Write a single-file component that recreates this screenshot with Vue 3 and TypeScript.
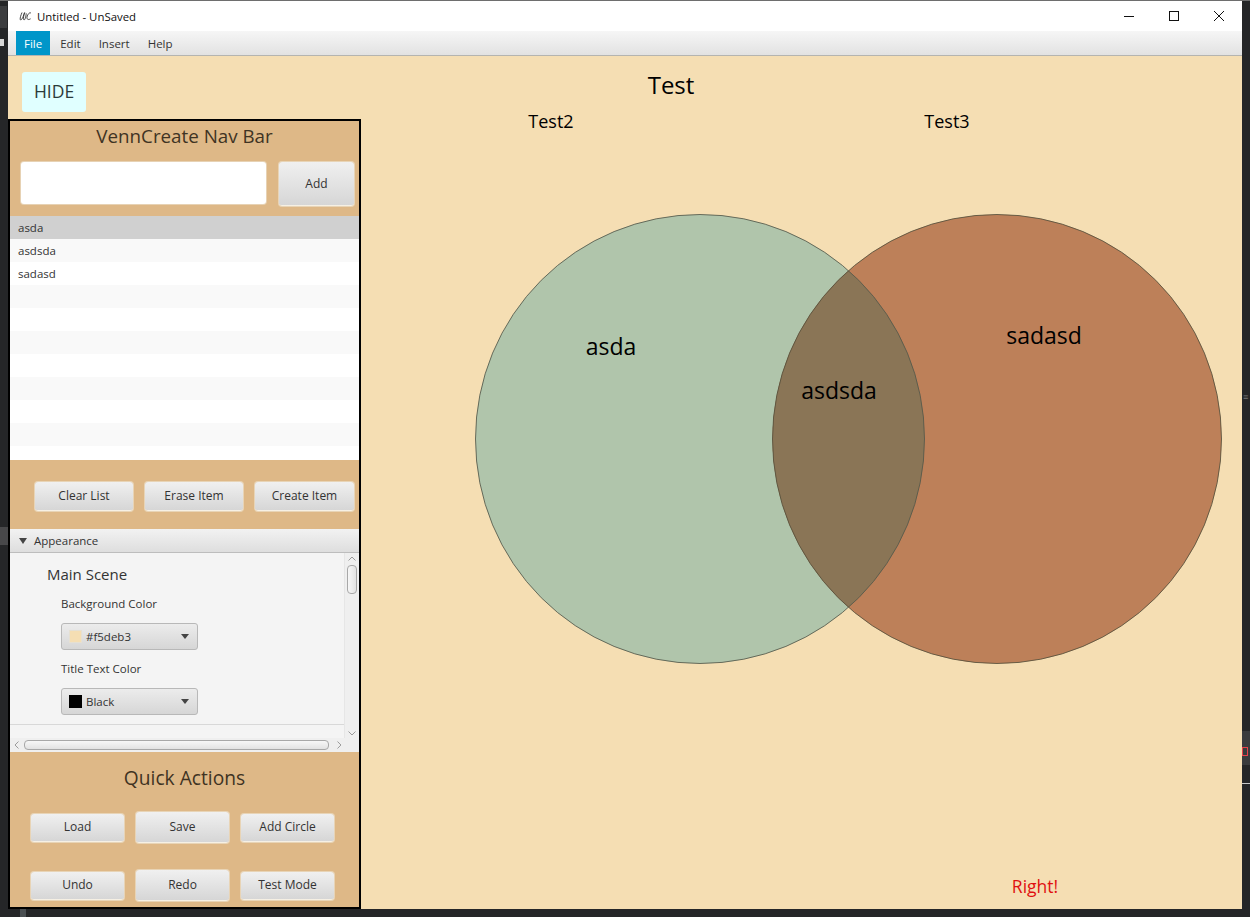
<template>
  <div class="desktop">
    <div class="bg-strip left-top"></div>
    <div class="bg-strip left-icon"></div>
    <div class="bg-strip left-tab"></div>
    <div class="bg-strip right-mark">≡</div>
    <div class="bg-strip right-tab"><span class="red-box"></span></div>
    <div class="bg-strip right-line"></div>
    <div class="bg-strip bottom-bar"></div>

    <div class="window">
      <header class="titlebar">
        <svg class="logo" width="13" height="11" viewBox="0 0 13 11">
          <path d="M3 1.5C2 4 .8 7 1.3 8.6c.5 1.2 2-.8 3-3.400L5.600 1.600C4.800 4 4 7.500 4.800 8.800c.7.800 2.200-2 2.400-6.500" fill="none" stroke="#333" stroke-width=".9" />
          <path d="M12 2.200C10.600.8 8.600 3.400 8 6c-.4 2 1 3.400 3.600 1.800" fill="none" stroke="#333" stroke-width=".9" />
        </svg>
        <span class="title-text">Untitled - UnSaved</span>
        <div class="win-controls">
          <svg width="12" height="12" viewBox="0 0 12 12"><path d="M1 6.500h10" stroke="#111" stroke-width="1" /></svg>
          <svg width="12" height="12" viewBox="0 0 12 12"><rect x="1.500" y="1.500" width="9" height="9" fill="none" stroke="#111" /></svg>
          <svg width="12" height="12" viewBox="0 0 12 12"><path d="M1 1l10 10M11 1L1 11" stroke="#111" stroke-width="1" /></svg>
        </div>
      </header>

      <nav class="menubar">
        <span v-for="(m, i) in menus" :key="m" class="menu-item" :class="{ active: i === 0 }">{{ m }}</span>
      </nav>

      <div class="content">
        <aside class="sidebar">
          <button class="hide-btn">HIDE</button>
          <div class="panel">
            <h2 class="panel-title">VennCreate Nav Bar</h2>
            <div class="add-row">
              <div class="text-input"></div>
              <button class="btn add-btn">Add</button>
            </div>
            <ul class="list">
              <li v-for="(row, i) in rows" :key="i" class="list-row" :class="{ selected: i === 0, odd: i % 2 === 1 }">{{ row }}</li>
            </ul>
            <div class="list-actions">
              <button class="btn">Clear List</button>
              <button class="btn">Erase Item</button>
              <button class="btn">Create Item</button>
            </div>

            <div class="accordion-head">
              <svg width="8" height="6" viewBox="0 0 8 6"><path d="M0 0h8L4 6z" fill="#444" /></svg>
              <span>Appearance</span>
            </div>
            <div class="scroll-pane">
              <div class="scroll-main">
                <div class="scroll-content">
                  <div class="scene-title">Main Scene</div>
                  <div class="field-label">Background Color</div>
                  <div class="combo">
                    <span class="swatch cream"></span>
                    <span class="combo-text">#f5deb3</span>
                    <svg width="8" height="5" viewBox="0 0 8 5"><path d="M0 0h8L4 5z" fill="#444" /></svg>
                  </div>
                  <div class="field-label">Title Text Color</div>
                  <div class="combo">
                    <span class="swatch black"></span>
                    <span class="combo-text">Black</span>
                    <svg width="8" height="5" viewBox="0 0 8 5"><path d="M0 0h8L4 5z" fill="#444" /></svg>
                  </div>
                </div>
                <div class="vbar">
                  <svg width="8" height="5" viewBox="0 0 8 5"><path d="M.5 4.500L4 1l3.500 3.500" fill="none" stroke="#9a9a9a" /></svg>
                  <div class="vthumb"></div>
                  <svg class="down" width="8" height="5" viewBox="0 0 8 5"><path d="M.5 .5L4 4l3.500-3.500" fill="none" stroke="#9a9a9a" /></svg>
                </div>
              </div>
              <div class="hbar">
                <svg width="5" height="8" viewBox="0 0 5 8"><path d="M4.500 .5L1 4l3.500 3.500" fill="none" stroke="#9a9a9a" /></svg>
                <div class="hthumb"></div>
                <svg width="5" height="8" viewBox="0 0 5 8"><path d="M.5 .5L4 4 .5 7.500" fill="none" stroke="#9a9a9a" /></svg>
              </div>
            </div>

            <div class="quick">
              <h2 class="quick-title">Quick Actions</h2>
              <div class="quick-grid">
                <button v-for="q in quickActions" :key="q.label" class="btn" :class="{ tall: q.tall }">{{ q.label }}</button>
              </div>
            </div>
          </div>
        </aside>

        <main class="canvas">
          <svg class="venn" width="881" height="853" viewBox="0 0 881 853">
            <defs>
              <clipPath id="lens"><circle cx="339" cy="383" r="224.500" /></clipPath>
            </defs>
            <circle cx="339" cy="383" r="224.500" fill="#b0c5ab" />
            <circle cx="636" cy="383" r="224.500" fill="#bd8059" />
            <circle cx="636" cy="383" r="224.500" fill="#8a7556" clip-path="url(#lens)" />
            <circle cx="339" cy="383" r="224.500" fill="none" stroke="#55584a" stroke-opacity=".85" stroke-width="1" />
            <circle cx="636" cy="383" r="224.500" fill="none" stroke="#55503c" stroke-opacity=".85" stroke-width="1" />
          </svg>
          <span v-for="t in labels" :key="t.text" class="canvas-label" :class="t.cls" :style="{ left: t.x + 'px', top: t.y + 'px' }">{{ t.text }}</span>
        </main>
      </div>
    </div>
  </div>
</template>

<script setup lang="ts">
const menus: string[] = ["File", "Edit", "Insert", "Help"];

const rows: string[] = ["asda", "asdsda", "sadasd", "", "", "", "", "", "", "", ""];

const quickActions: { label: string; tall?: boolean }[] = [
  { label: "Load" },
  { label: "Save", tall: true },
  { label: "Add Circle" },
  { label: "Undo" },
  { label: "Redo", tall: true },
  { label: "Test Mode" },
];

// centre points, measured from the canvas corner
const labels: { text: string; x: number; y: number; cls: string }[] = [
  { text: "Test", x: 310, y: 28, cls: "big" },
  { text: "Test2", x: 190, y: 65, cls: "mid" },
  { text: "Test3", x: 586, y: 65, cls: "mid" },
  { text: "asda", x: 250, y: 290, cls: "item" },
  { text: "asdsda", x: 478, y: 334, cls: "item" },
  { text: "sadasd", x: 683, y: 279, cls: "item" },
  { text: "Right!", x: 674, y: 830, cls: "right" },
];
</script>

<style>
html,
body {
  margin: 0;
  background: #252526;
}
</style>

<style scoped>
.desktop {
  position: relative;
  box-sizing: border-box;
  width: 1250px;
  height: 917px;
  padding: 0 8px 8px;
  background: #252628;
  border-top: 1px solid #6e6e6e;
  font-family: "Open Sans", "Noto Sans", sans-serif;
  color: #333;
  overflow: hidden;
}

.bg-strip {
  position: absolute;
}

.left-top {
  left: 0;
  top: 5px;
  width: 7px;
  height: 22px;
  background: #3c3d3f;
}

.left-icon {
  left: 0;
  top: 38px;
  width: 4px;
  height: 7px;
  background: #d8d8d8;
}

.left-tab {
  left: 0;
  top: 526px;
  width: 8px;
  height: 18px;
  background: #48484a;
}

.right-mark {
  left: 1243px;
  top: 389px;
  font-size: 9px;
  line-height: 14px;
  color: #77787a;
}

.right-tab {
  left: 1242px;
  top: 730px;
  width: 8px;
  height: 34px;
  background: #3a3b3d;
}

.red-box {
  position: absolute;
  left: 0;
  top: 16px;
  width: 6px;
  height: 9px;
  border: 1px solid #e8414a;
  box-sizing: border-box;
}

.right-line {
  left: 1242px;
  top: 782px;
  width: 8px;
  height: 1px;
  background: #c8c8c8;
}

.bottom-bar {
  left: 20px;
  top: 908px;
  width: 6px;
  height: 9px;
  background: #4a4f52;
}

.window {
  display: flex;
  flex-direction: column;
  width: 1234px;
  height: 908px;
  background: #f5deb3;
}

.titlebar {
  display: flex;
  align-items: center;
  flex: 0 0 30px;
  background: #fff;
  color: #111;
  font-size: 11.4px;
}

.logo {
  margin-left: 11px;
  margin-right: 5px;
}

.win-controls {
  display: flex;
  align-items: center;
  gap: 33px;
  margin-left: auto;
  margin-right: 17px;
}

.menubar {
  display: flex;
  flex: 0 0 25px;
  box-sizing: border-box;
  padding-left: 8px;
  background: linear-gradient(#f6f6f6, #e2e2e2);
  border-bottom: 1px solid #b4b4b0;
  font-size: 11.5px;
}

.menu-item {
  display: flex;
  align-items: center;
  padding: 0 9px;
  color: #333;
}

.menu-item.active {
  padding: 0 8px;
  margin-right: 1px;
  background: #0096c9;
  color: #fff;
}

.content {
  display: flex;
  flex: 1;
  min-height: 0;
}

.sidebar {
  display: flex;
  flex-direction: column;
  width: 353px;
  flex: none;
}

.hide-btn {
  align-self: flex-start;
  width: 64px;
  height: 40px;
  margin: 16px 0 7px 14px;
  padding: 0 0 3px;
  background: #e0ffff;
  border: 0;
  border-radius: 3px;
  font-family: inherit;
  font-size: 17.5px;
  color: #2b3a3a;
}

.panel {
  display: flex;
  flex-direction: column;
  flex: 1;
  box-sizing: border-box;
  background: #deb887;
  border: 2px solid #000;
  min-height: 0;
}

.panel-title {
  margin: 0;
  height: 41px;
  line-height: 30px;
  text-align: center;
  font-size: 18.8px;
  font-weight: 400;
  color: #3f3323;
}

.add-row {
  display: flex;
  justify-content: space-between;
  height: 44px;
  padding: 0 5px 0 11px;
}

.text-input {
  width: 245px;
  height: 42px;
  background: #fff;
  border-radius: 3px;
  box-shadow: 0 0 0 1px #e7d2b4;
}

.btn {
  height: 28px;
  padding: 0 0 2px;
  background: linear-gradient(#f0f0f0, #d6d6d6);
  border: 0;
  border-bottom: 1px solid #f6f0e4;
  border-radius: 3px;
  box-shadow: 0 0 0 1px #e8d4b6;
  font-family: inherit;
  font-size: 12px;
  color: #333;
}

.add-btn {
  width: 75px;
  height: 44px;
  padding: 0;
}

.list {
  margin: 10px 0 0;
  padding: 0;
  height: 244px;
  list-style: none;
  overflow: hidden;
  background: #fff;
}

.list-row {
  box-sizing: border-box;
  height: 23px;
  padding-left: 8px;
  background: #fff;
  font-size: 11.5px;
  line-height: 23px;
  color: #333;
}

.list-row.odd {
  background: #f9f9f9;
}

.list-row.selected {
  background: #d0d0d0;
}

.list-actions {
  display: flex;
  align-items: flex-start;
  gap: 12px;
  height: 47px;
  padding: 22px 0 0 25px;
  flex: none;
}

.list-actions .btn {
  width: 98px;
  height: 29px;
}

.list-actions .btn:last-child {
  width: 99px;
}

.accordion-head {
  display: flex;
  align-items: center;
  gap: 7px;
  box-sizing: border-box;
  height: 24px;
  padding-left: 9px;
  background: linear-gradient(#f2f2f2, #dedede);
  border-bottom: 1px solid #bdbdbd;
  font-size: 11.5px;
  color: #333;
}

.scroll-pane {
  display: flex;
  flex-direction: column;
  flex: none;
  height: 199px;
  background: #f4f4f4;
}

.scroll-main {
  display: flex;
  flex: 1;
  min-height: 0;
}

.scroll-content {
  flex: 1;
  box-sizing: border-box;
  height: 172px;
  padding: 10px 0 0 37px;
  border-bottom: 1px solid #d8d8d8;
}

.scene-title {
  height: 22px;
  line-height: 22px;
  font-size: 15px;
  color: #333;
}

.field-label {
  margin: 11px 0 11px 14px;
  line-height: 16px;
  font-size: 11.5px;
  color: #333;
}

.combo {
  display: flex;
  align-items: center;
  box-sizing: border-box;
  width: 137px;
  height: 27px;
  margin-left: 14px;
  padding: 0 8px 0 7px;
  background: linear-gradient(#ececec, #d6d6d6);
  border: 1px solid #b8b8b8;
  border-radius: 3px;
  font-size: 11.5px;
  color: #333;
}

.combo svg {
  margin-left: auto;
}

.swatch {
  box-sizing: border-box;
  width: 13px;
  height: 13px;
  margin-right: 4px;
}

.swatch.cream {
  background: #f5deb3;
  border: 1px solid #e6e0d2;
}

.swatch.black {
  background: #000;
}

.vbar {
  display: flex;
  flex-direction: column;
  align-items: center;
  box-sizing: border-box;
  width: 15px;
  padding: 3px 0 0;
  background: #efefef;
  border-left: 1px solid #e6e6e6;
}

.vthumb {
  box-sizing: border-box;
  width: 10px;
  height: 29px;
  margin-top: 4px;
  background: linear-gradient(90deg, #f7f7f7, #e2e2e2);
  border: 1px solid #a8a8a8;
  border-radius: 4px;
}

.vbar .down {
  margin-top: auto;
  margin-bottom: 2px;
}

.hbar {
  display: flex;
  align-items: center;
  gap: 5px;
  box-sizing: border-box;
  height: 14px;
  padding: 0 17px 0 4px;
  background: #efefef;
}

.hthumb {
  width: 307px;
  height: 10px;
  box-sizing: border-box;
  margin-right: 3px;
  background: linear-gradient(#f7f7f7, #e2e2e2);
  border: 1px solid #a8a8a8;
  border-radius: 4px;
}

.quick {
  flex: 1;
  min-height: 0;
}

.quick-title {
  margin: 13px 0 21px;
  line-height: 26px;
  text-align: center;
  font-size: 19.2px;
  font-weight: 400;
  color: #3f3323;
}

.quick-grid {
  display: grid;
  grid-template-columns: repeat(3, 93px);
  grid-auto-rows: 31px;
  align-items: center;
  gap: 27px 12px;
  padding-left: 21px;
}

.quick-grid .btn.tall {
  height: 31px;
}

.canvas {
  position: relative;
  flex: 1;
  min-width: 0;
  overflow: hidden;
}

.venn {
  position: absolute;
  left: 0;
  top: 0;
}

.canvas-label {
  position: absolute;
  transform: translate(-50%, -50%);
  white-space: nowrap;
  color: #000;
}

.canvas-label.big {
  font-size: 24px;
}

.canvas-label.mid {
  font-size: 18px;
}

.canvas-label.item {
  font-size: 23px;
}

.canvas-label.right {
  font-size: 17.500px;
  color: #e01010;
}
</style>
